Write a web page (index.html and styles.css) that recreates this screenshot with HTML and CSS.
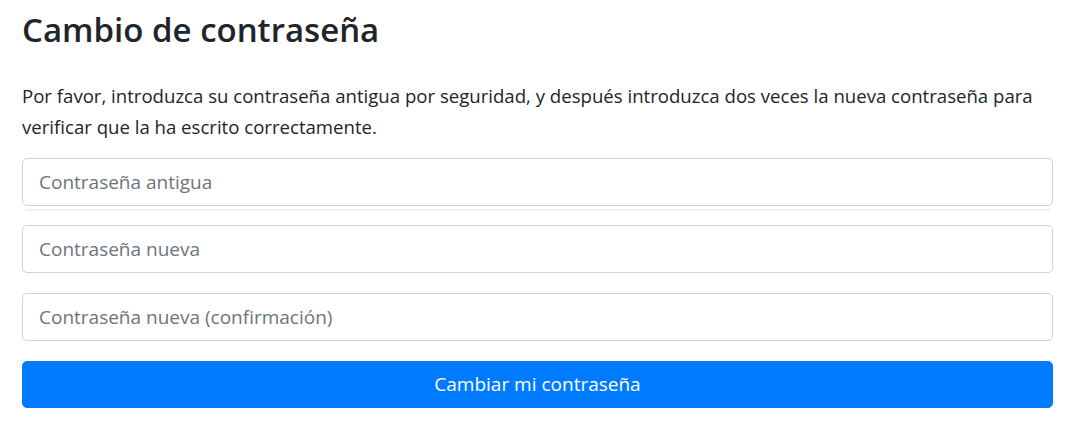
FILE: index.html
```html
<!DOCTYPE html>
<html lang="es">
<head>
<meta charset="utf-8">
<title>Cambio de contraseña</title>
<link rel="stylesheet" href="styles.css">
</head>
<body>
<main class="container">
  <h1 class="title">Cambio de contraseña</h1>
  <p class="lead">Por favor, introduzca su contraseña antigua por seguridad, y después introduzca dos veces la nueva contraseña para verificar que la ha escrito correctamente.</p>
  <form class="form">
    <div class="field">
      <input class="input" type="password" placeholder="Contraseña antigua">
      <div class="meter"></div>
    </div>
    <input class="input" type="password" placeholder="Contraseña nueva">
    <input class="input" type="password" placeholder="Contraseña nueva (confirmación)">
    <button class="btn" type="button">Cambiar mi contraseña</button>
  </form>
</main>
</body>
</html>
```
FILE: styles.css
```css
* { box-sizing: border-box; }
html, body { margin: 0; background: #fff; }
body {
  font-family: "Open Sans", "Noto Sans", sans-serif;
  color: #212529;
}
.container {
  padding: 10px 14px 0 22px;
}
.title {
  font-size: 33px;
  font-weight: 600;
  line-height: 1.2;
  margin: 0 0 30px 0;
}
.lead {
  font-size: 18.6px;
  line-height: 31px;
  margin: 0 0 16px 0;
}
.form {
  display: flex;
  flex-direction: column;
  gap: 19.7px;
}
.field { position: relative; }
.meter {
  position: absolute;
  left: 3px;
  right: 3px;
  top: 51px;
  height: 2px;
  background: #e7f1fd;
}
.input {
  display: block;
  width: 100%;
  height: 48px;
  padding: 8px 16px;
  font-family: inherit;
  font-size: 19px;
  color: #495057;
  background: #fff;
  border: 1px solid #ced4da;
  border-radius: 5px;
  outline: none;
}
.input::placeholder { color: #6c757d; opacity: 1; }
.btn {
  display: block;
  width: 100%;
  height: 47px;
  font-family: inherit;
  font-size: 19px;
  color: #fff;
  background: #007bff;
  border: 1px solid #007bff;
  border-radius: 5px;
}
```
